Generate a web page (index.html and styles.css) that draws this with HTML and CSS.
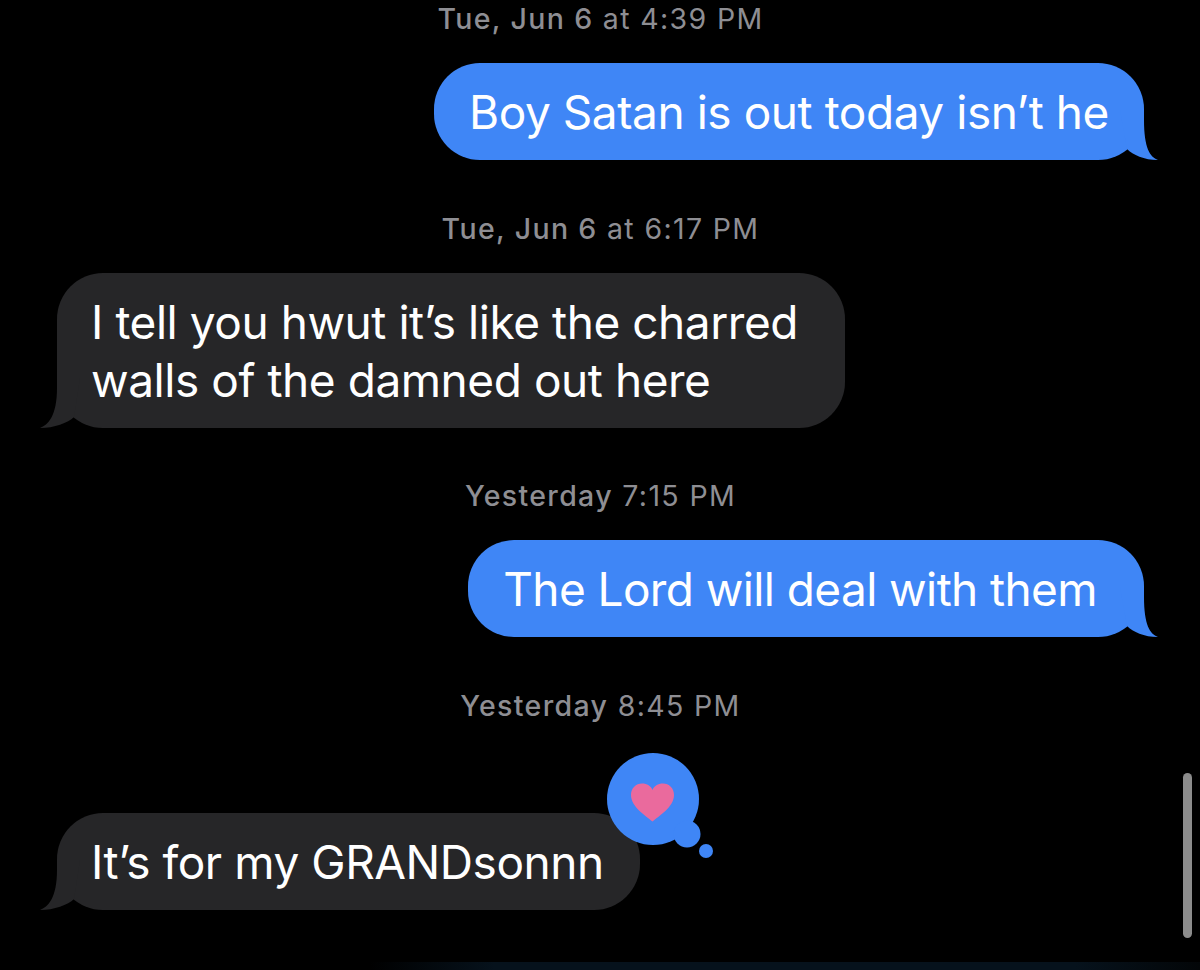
FILE: index.html
```html
<!DOCTYPE html>
<html>

<head>
    <title>Messages</title>
    <link rel="stylesheet" href="styles.css">
</head>

<body>
    <div class="thread">
        <p class="stamp stamp-first"><b>Tue, Jun 6</b> at 4:39 PM</p>
        <div class="row sent">
            <div class="bubble">Boy Satan is out today isn’t he
                <svg class="tail" width="58" height="50" viewBox="0 0 58 50">
                    <path d="M27 39C33 45 44 50 58 50C50 47 44 38 44 10V0H20Z" />
                </svg>
            </div>
        </div>

        <p class="stamp"><b>Tue, Jun 6</b> at 6:17 PM</p>
        <div class="row received">
            <div class="bubble bubble-wide">I tell you hwut it’s like the charred<br>walls of the damned out here
                <svg class="tail" width="58" height="50" viewBox="0 0 58 50">
                    <path d="M34 39C28 45 14 50 0 50C8 47 17 38 17 10V0H40Z" />
                </svg>
            </div>
        </div>

        <p class="stamp stamp-gap"><b>Yesterday</b> 7:15 PM</p>
        <div class="row sent">
            <div class="bubble bubble-wide bubble-tight">The Lord will deal with them
                <svg class="tail" width="58" height="50" viewBox="0 0 58 50">
                    <path d="M27 39C33 45 44 50 58 50C50 47 44 38 44 10V0H20Z" />
                </svg>
            </div>
        </div>

        <p class="stamp"><b>Yesterday</b> 8:45 PM</p>
        <div class="row received row-tapback">
            <div class="bubble">It’s for my GRANDsonnn
                <svg class="tail" width="58" height="50" viewBox="0 0 58 50">
                    <path d="M34 39C28 45 14 50 0 50C8 47 17 38 17 10V0H40Z" />
                </svg>
                <!-- heart reaction sits over the bubble's top right corner -->
                <svg class="tapback" width="110" height="112" viewBox="0 0 110 112">
                    <circle cx="47" cy="46" r="46" fill="#3f86f6" />
                    <circle cx="81" cy="81" r="13.5" fill="#3f86f6" />
                    <circle cx="100" cy="98" r="7" fill="#3f86f6" />
                    <path fill="#ea6a9d" d="M46.5 68.5C40 63 25 54 25 42C25 35 30 30.5 36 30.5C41 30.5 45 33 46.5 37C48 33 52 30.5 57 30.5C63 30.5 68 35 68 42C68 54 53 63 46.5 68.5Z" />
                </svg>
            </div>
        </div>
    </div>

    <div class="scrollbar"></div>
    <div class="glow"></div>
</body>

</html>
```

FILE: styles.css
```css
html,
body {
    margin: 0;
    height: 970px;
    overflow: hidden;
    background-color: #000;
}

body {
    position: relative;
    font-family: Inter, "Liberation Sans", sans-serif;
}

.thread {
    display: flex;
    flex-direction: column;
    padding: 0 56px 0 57px;
}

.stamp {
    margin: 46px 0 22px;
    height: 45px;
    line-height: 45px;
    text-align: center;
    font-size: 28.5px;
    letter-spacing: 1.35px;
    color: #8e8e93;
}

.stamp b {
    font-weight: 500;
}

.stamp-first {
    margin: 0 0 26px;
    height: 37px;
    line-height: 37px;
}

.stamp-gap {
    margin-top: 45px;
}

.row {
    display: flex;
}

.sent {
    justify-content: flex-end;
}

.received {
    justify-content: flex-start;
}

.row-tapback {
    margin-top: 63px;
}

.bubble {
    position: relative;
    padding: 20px 35px 19px;
    border-radius: 46px;
    font-size: 46px;
    line-height: 58px;
    letter-spacing: -0.45px;
    color: #fff;
    white-space: nowrap;
}

.sent .bubble {
    background-color: #3f86f6;
}

.received .bubble {
    padding-left: 34px;
    padding-right: 36px;
    background-color: #262628;
}

.row .bubble-wide {
    padding-right: 47px;
}

.bubble-tight {
    letter-spacing: -0.6px;
}

.tail {
    position: absolute;
    bottom: 0;
}

.sent .tail {
    right: -14px;
    fill: #3f86f6;
}

.received .tail {
    left: -17px;
    fill: #262628;
}

.tapback {
    position: absolute;
    left: 549px;
    top: -60px;
}

.scrollbar {
    position: absolute;
    left: 1183px;
    top: 773px;
    width: 9px;
    height: 165px;
    border-radius: 5px;
    background-color: #8c8c8c;
}

.glow {
    position: absolute;
    left: 370px;
    right: 0;
    bottom: 0;
    height: 8px;
    background: linear-gradient(to right, #000, #06121c 15%, #06121c 85%, #030608);
}
```
